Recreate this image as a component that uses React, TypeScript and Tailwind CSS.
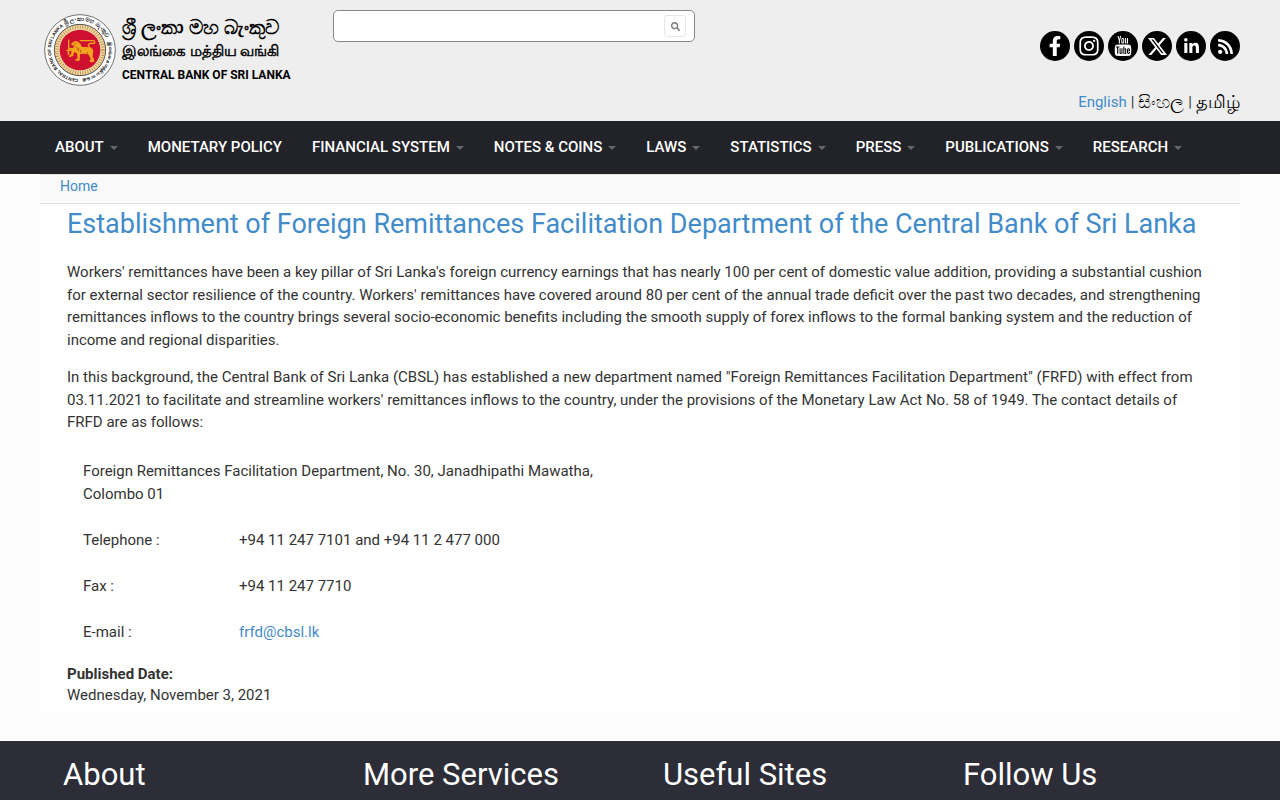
import { BsTwitterX } from "react-icons/bs";
import { FaFacebookF, FaInstagram, FaLinkedinIn, FaRss, FaSearch } from "react-icons/fa";
import { TfiYoutube } from "react-icons/tfi";

const navItems = [
  { label: "About", menu: true },
  { label: "Monetary Policy", menu: false },
  { label: "Financial System", menu: true },
  { label: "Notes & Coins", menu: true },
  { label: "Laws", menu: true },
  { label: "Statistics", menu: true },
  { label: "Press", menu: true },
  { label: "Publications", menu: true },
  { label: "Research", menu: true },
];

const footerColumns = ["About", "More Services", "Useful Sites", "Follow Us"];

function Seal() {
  return (
    <svg viewBox="0 0 240 240" className="size-[80px] shrink-0" aria-hidden="true">
      <defs>
        <path id="ring" d="M120 207 A87 87 0 0 1 120 33 A87 87 0 0 1 120 207" />
        <path id="ringTop" d="M33 120 A87 87 0 0 1 207 120 A87 87 0 0 1 33 120" />
      </defs>
      <circle cx="120" cy="120" r="106" fill="#fff" stroke="#555" strokeWidth="2.5" />
      <circle cx="120" cy="120" r="77" fill="#f3d9a4" stroke="#333" strokeWidth="2.5" />
      <circle cx="120" cy="120" r="69" fill="none" stroke="#b98d4e" strokeWidth="11" strokeDasharray="2.5 5" />
      <circle cx="120" cy="120" r="61" fill="#cf1030" />
      <g className="font-['Liberation_Sans',sans-serif] font-bold" fill="#111">
        <text fontSize="14">
          <textPath href="#ring" startOffset="5">CENTRAL BANK OF SRI LANKA</textPath>
        </text>
        <text fontSize="18">
          <textPath href="#ringTop" startOffset="88">ශ්‍රී ලංකා මහ බැංකුව</textPath>
        </text>
        <text fontSize="14">
          <textPath href="#ringTop" startOffset="248">இலங்கை மத்திய வங்கி</textPath>
        </text>
      </g>
      <g fill="#f2a51c">
        <path d="M84 89 h4 v30 h7 v4 h-7 v12 h-5 v-12 h-4 v-4 h5z" />
        <path d="M97 98 q7 -8 17 -3 l8 7 q2 7 5 9 l22 1 q11 2 11 14 l-2 10 q-1 6 3 9 l2 11 h-13 l-1 -6 l4 -2 l-7 -14 l-9 -3 l-17 1 l-1 20 h-13 l1 -5 l6 -2 l-2 -15 l-8 -4 l-4 12 l-10 4 l-3 -4 l7 -5 l2 -13 l-9 -2 l-2 -5 l14 1 l6 -7 l-8 -1 l-3 -4z" />
        <path d="M152 116 q-9 -8 -6 -13 q7 -5 17 -2 M163 101 q4 -7 -4 -9 h-40" fill="none" stroke="#f2a51c" strokeWidth="4" />
      </g>
      <path d="M103 101 l5 1 M108 112 l9 5 l-3 6 M121 119 l2 10 M144 126 l-4 8" fill="none" stroke="#a52a17" strokeWidth="2" />
    </svg>
  );
}

const socials = [
  { label: "Facebook", icon: <FaFacebookF className="size-5" /> },
  { label: "Instagram", icon: <FaInstagram className="size-[22px]" /> },
  { label: "YouTube", icon: <TfiYoutube className="size-5" /> },
  { label: "X", icon: <BsTwitterX className="size-[19px]" /> },
  { label: "LinkedIn", icon: <FaLinkedinIn className="size-[17px]" /> },
  { label: "RSS", icon: <FaRss className="size-[17px]" /> },
];

function Header() {
  return (
    <header className="bg-[#eeeeee]">
      <div className="max-w-[1200px] mx-auto pb-2 flex items-start">
        <a href="#" className="flex w-[293px] mt-[10px] text-black">
          <Seal />
          <span className="flex flex-col mt-[5px] ml-[2px] whitespace-nowrap">
            <span className="text-[20px] leading-6 font-bold">ශ්‍රී ලංකා මහ බැංකුව</span>
            <span className="text-[15px] leading-6 [-webkit-text-stroke:0.5px_black]">இலங்கை மத்திய வங்கி</span>
            <span className="text-[12px] leading-6 font-bold">CENTRAL BANK OF SRI LANKA</span>
          </span>
        </a>
        <form className="w-[362px] h-8 mt-[10px] flex items-center bg-white border border-[#888] rounded-[5px] pr-2">
          <input type="text" aria-label="Search" className="flex-1 h-full px-3 text-sm focus:outline-none" />
          <button
            type="button"
            aria-label="Submit search"
            className="size-[22px] flex items-center justify-center border border-gray-200 rounded-[3px] text-[#777]"
          >
            <FaSearch className="size-[9px]" />
          </button>
        </form>
        <div className="ml-auto flex flex-col items-end">
          <div className="flex gap-1 mt-[31px]">
            {socials.map((s) => (
              <a
                key={s.label}
                href="#"
                aria-label={s.label}
                className="size-[30px] rounded-full bg-black text-white flex items-center justify-center"
              >
                {s.icon}
              </a>
            ))}
          </div>
          <div className="mt-[30px] flex items-center gap-1 h-[22px] text-[15px] leading-[22px] text-[#333]">
            <a href="#" className="text-[#428bca]">English</a>
            <span>|</span>
            <a href="#" className="text-[18px] text-black">සිංහල</a>
            <span>|</span>
            <a href="#" className="text-[18px] text-black">தமிழ்</a>
          </div>
        </div>
      </div>
    </header>
  );
}

function Navbar() {
  return (
    <nav className="bg-[#222329]">
      <ul className="max-w-[1200px] mx-auto flex">
        {navItems.map((item) => (
          <li key={item.label}>
            <a
              href="#"
              className="flex items-center gap-[6px] h-[53px] px-[15px] text-[15px] font-medium uppercase text-white whitespace-nowrap"
            >
              {item.label}
              {item.menu && (
                <span className="border-x-4 border-t-4 border-x-transparent border-t-[#66676c]" />
              )}
            </a>
          </li>
        ))}
      </ul>
    </nav>
  );
}

export default function App() {
  return (
    <div className="min-h-screen bg-[#fdfdfd] font-[Roboto,'Noto_Sans',sans-serif] text-[#333] text-[15px]">
      <Header />
      <Navbar />
      <main className="max-w-[1200px] mx-auto bg-white">
        <div className="h-[30px] pl-5 bg-[#f9f9f9] border-y border-[#e0e0e0] text-[14px] leading-[22px]">
          <a href="#" className="text-[#428bca]">Home</a>
        </div>
        <article className="px-[27px] pb-[7px]">
          <h1 className="pt-[5px] mb-[22px] text-[27px] leading-[30px] text-[#428bca]">
            Establishment of Foreign Remittances Facilitation Department of the Central Bank of Sri Lanka
          </h1>
          <p className="mb-[15px] leading-normal">
            Workers' remittances have been a key pillar of Sri Lanka's foreign currency earnings that has nearly 100 per
            cent of domestic value addition, providing a substantial cushion for external sector resilience of the
            country. Workers' remittances have covered around 80 per cent of the annual trade deficit over the past two
            decades, and strengthening remittances inflows to the country brings several socio-economic benefits
            including the smooth supply of forex inflows to the formal banking system and the reduction of income and
            regional disparities.
          </p>
          <p className="mb-[15px] leading-normal">
            In this background, the Central Bank of Sri Lanka (CBSL) has established a new department named "Foreign
            Remittances Facilitation Department" (FRFD) with effect from 03.11.2021 to facilitate and streamline
            workers' remittances inflows to the country, under the provisions of the Monetary Law Act No. 58 of 1949.
            The contact details of FRFD are as follows:
          </p>
          <table className="ml-2 w-[540px] table-fixed leading-[23px] text-left">
            <colgroup>
              <col className="w-[156px]" />
              <col />
            </colgroup>
            <tbody>
              <tr>
                <td colSpan={2} className="px-2 pt-[11px] pb-3">
                  Foreign Remittances Facilitation Department, No. 30, Janadhipathi Mawatha,
                  <br />
                  Colombo 01
                </td>
              </tr>
              <tr>
                <th scope="row" className="px-2 pt-[11px] pb-3 font-normal">Telephone :</th>
                <td className="px-2 pt-[11px] pb-3">+94 11 247 7101 and +94 11 2 477 000</td>
              </tr>
              <tr>
                <th scope="row" className="px-2 pt-[11px] pb-3 font-normal">Fax :</th>
                <td className="px-2 pt-[11px] pb-3">+94 11 247 7710</td>
              </tr>
              <tr>
                <th scope="row" className="px-2 pt-[11px] pb-3 font-normal">E-mail :</th>
                <td className="px-2 pt-[11px] pb-3">
                  <a href="#" className="text-[#428bca]">frfd@cbsl.lk</a>
                </td>
              </tr>
            </tbody>
          </table>
          <div className="mt-2 leading-[21px]">
            <div className="font-bold">Published Date:</div>
            <div>Wednesday, November 3, 2021</div>
          </div>
        </article>
      </main>
      <footer className="mt-7 bg-[#2d2d37] text-white">
        <div className="max-w-[1200px] mx-auto grid grid-cols-4 pb-2">
          {footerColumns.map((title) => (
            <h2 key={title} className="pl-[23px] pt-4 text-[31px] leading-9">{title}</h2>
          ))}
        </div>
      </footer>
    </div>
  );
}
